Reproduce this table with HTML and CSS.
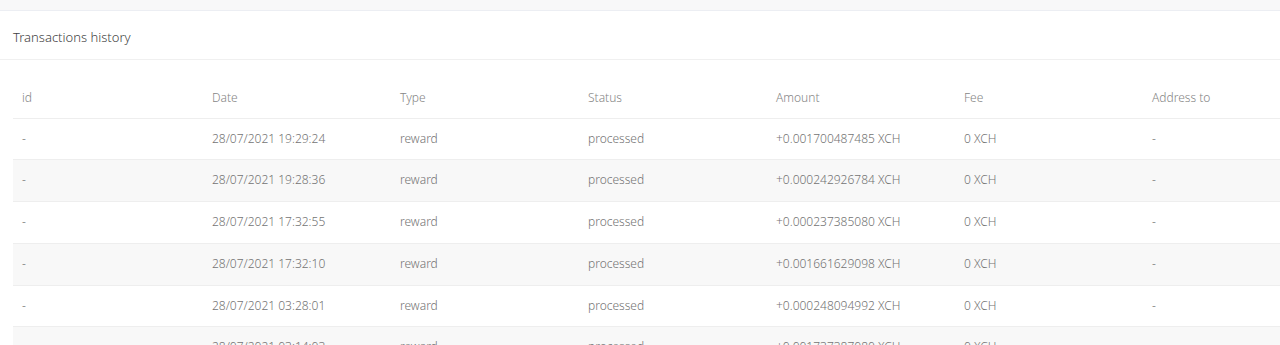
FILE: index.html
```html
<!DOCTYPE html>
<html lang="en">
<head>
<meta charset="utf-8">
<title>Transactions history</title>
<link rel="stylesheet" href="styles.css">
</head>
<body>
<div class="topbar"></div>
<section class="card">
  <header class="card-header">Transactions history</header>
  <div class="card-body">
    <table class="tx-table">
      <thead>
        <tr><th>id</th><th>Date</th><th>Type</th><th>Status</th><th>Amount</th><th>Fee</th><th>Address to</th></tr>
      </thead>
      <tbody>
        <tr><td>-</td><td>28/07/2021 19:29:24</td><td>reward</td><td>processed</td><td>+0.001700487485 XCH</td><td>0 XCH</td><td>-</td></tr>
        <tr><td>-</td><td>28/07/2021 19:28:36</td><td>reward</td><td>processed</td><td>+0.000242926784 XCH</td><td>0 XCH</td><td>-</td></tr>
        <tr><td>-</td><td>28/07/2021 17:32:55</td><td>reward</td><td>processed</td><td>+0.000237385080 XCH</td><td>0 XCH</td><td>-</td></tr>
        <tr><td>-</td><td>28/07/2021 17:32:10</td><td>reward</td><td>processed</td><td>+0.001661629098 XCH</td><td>0 XCH</td><td>-</td></tr>
        <tr><td>-</td><td>28/07/2021 03:28:01</td><td>reward</td><td>processed</td><td>+0.000248094992 XCH</td><td>0 XCH</td><td>-</td></tr>
        <tr><td>-</td><td>28/07/2021 03:14:03</td><td>reward</td><td>processed</td><td>+0.001737387080 XCH</td><td>0 XCH</td><td>-</td></tr>
      </tbody>
    </table>
  </div>
</section>
</body>
</html>
```
FILE: styles.css
```css
html, body {
  margin: 0;
  padding: 0;
  background: #ffffff;
  overflow: hidden;
}
body {
  font-family: "Noto Sans", "Open Sans", sans-serif;
  color: #737373;
}
.topbar {
  height: 10px;
  background: #f8f8f9;
  border-bottom: 1px solid #eceef3;
}
.card {
  background: #fff;
}
.card-header {
  height: 48px;
  line-height: 52px;
  padding-left: 13px;
  font-size: 13px;
  font-weight: 300;
  color: #3f3f3f;
  border-bottom: 1px solid #f0f0f0;
}
.card-body {
  padding: 17px 0 0 13px;
}
.tx-table {
  border-collapse: collapse;
  table-layout: fixed;
  width: 1318px;
  font-size: 12px;
  font-weight: 300;
}
.tx-table th,
.tx-table td {
  box-sizing: border-box;
  width: 188px;
  padding: 12px 9px;
  line-height: 16.7px;
  text-align: left;
  font-weight: 300;
  border-bottom: 1px solid #eeeeee;
  white-space: nowrap;
}
.tx-table th:first-child,
.tx-table td:first-child {
  width: 190px;
}
.tx-table th {
  color: #858585;
  padding-top: 13px;
  padding-bottom: 11px;
}
.tx-table tbody tr:nth-child(even) {
  background: #f8f8f8;
}
```
